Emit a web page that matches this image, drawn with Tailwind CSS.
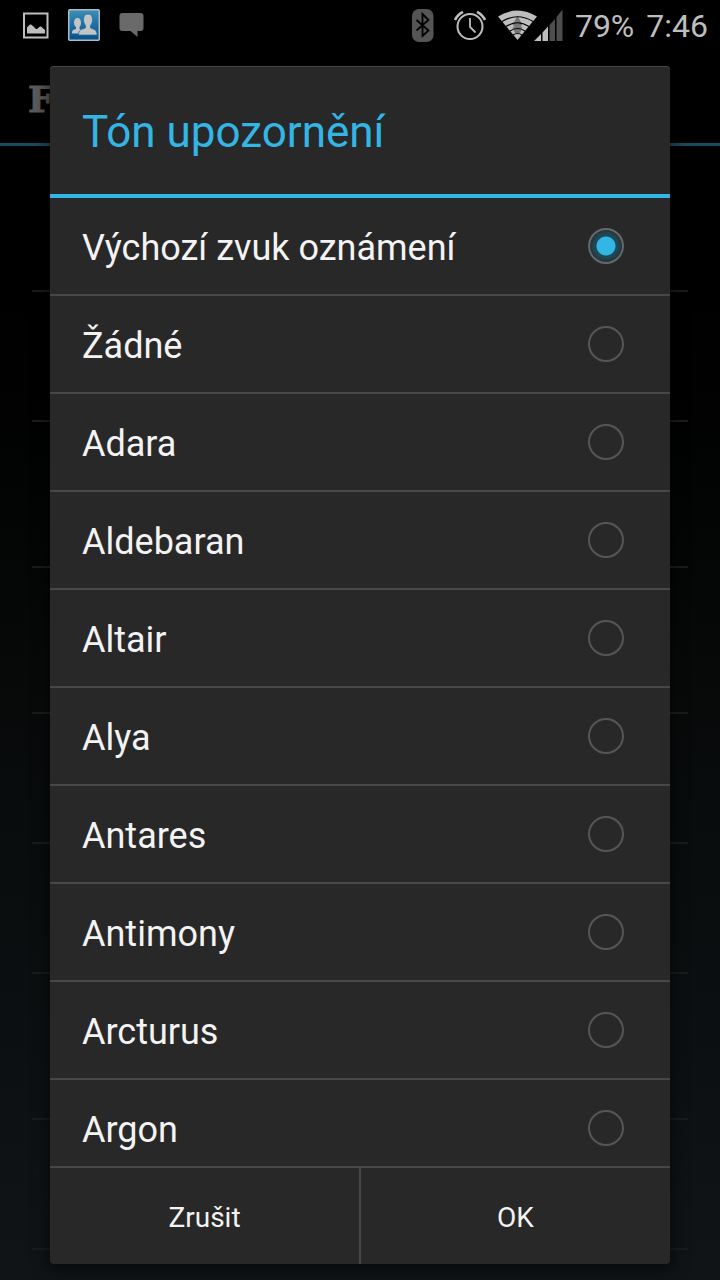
<!DOCTYPE html>
<html lang="cs">

<head>
    <title>Tón upozornění</title>
    <meta charset="UTF-8">
    <meta name="viewport" content="width=device-width, initial-scale=1">
    <script src="https://cdn.jsdelivr.net/npm/@tailwindcss/browser@4"></script>
</head>

<body class="bg-black font-['Roboto',sans-serif]">

<div class="relative h-screen flex flex-col overflow-hidden">

    <!-- Status bar -->
    <header class="h-[50px] shrink-0 flex items-center justify-between pl-[22px] pr-3 bg-black text-[#bebebe]">
        <div class="flex items-center gap-[19px]">
            <svg class="w-[27px] h-[27px]" viewBox="0 0 27 27">
                <rect x="2" y="1.500" width="23.500" height="24" fill="none" stroke="#bebebe" stroke-width="2"/>
                <path d="M5 21.500v-6l3-3h1l2 1.500 3 3h1l3-2.500h1l4 3.500v3.500z" fill="#bebebe"/>
            </svg>
            <svg class="w-8 h-8" viewBox="0 0 32 32">
                <defs>
                    <linearGradient id="contacts" x1="0" y1="0" x2="0" y2="1">
                        <stop offset="0" stop-color="#3d8fb4"/>
                        <stop offset=".5" stop-color="#1c6ea5"/>
                        <stop offset="1" stop-color="#07508a"/>
                    </linearGradient>
                </defs>
                <rect x=".75" y=".75" width="30.500" height="30.500" rx="1" fill="url(#contacts)" stroke="#a9bcc8" stroke-width="1.500"/>
                <g fill="#c4c4c4">
                    <path d="M9.500 9c2.500 0 3.500 2 3.500 5 0 2-.8 3-1.500 4v2l2.500 1.500-3.500 3H4c0-3 .5-3.500 4-4.500v-2c-1-1-2-2-2-4 0-3 1-5 3.500-5z"/>
                    <path d="M20 5c3 0 4.500 2 4.500 5.500 0 3-1 4.500-2 6V19c4 1.500 6.500 2 6.500 7H10.500c0-5 2.500-5.500 7-7v-2.500c-1-1.500-2-3-2-6C15.500 7 17 5 20 5z" stroke="#1c6ea5" stroke-width=".7"/>
                </g>
            </svg>
            <svg class="w-[25px] h-6" viewBox="0 0 24 24">
                <path d="M3 0h18a3 3 0 0 1 3 3v12a3 3 0 0 1-3 3h-3v6l-7-6H3a3 3 0 0 1-3-3V3a3 3 0 0 1 3-3z" fill="#6a6a6a"/>
            </svg>
        </div>
        <div class="flex items-center">
            <svg class="w-[22px] h-[33px] mr-5" viewBox="0 0 22 33">
                <rect width="21.500" height="33" rx="7" fill="#555"/>
                <path d="M4.500 11l12 10.500-6 5.500V5l6 6-12 10.500" fill="none" stroke="#000" stroke-width="1.800"/>
            </svg>
            <svg class="w-8 h-[30px] mr-3" viewBox="0 0 32 30" fill="none" stroke="#bebebe">
                <circle cx="16" cy="16.500" r="12.500" stroke-width="2"/>
                <path d="M16 8v9l5.500 5.500" stroke-width="1.800"/>
                <path d="M1 10Q3.500 4.500 9 1.800M31 10Q28.500 4.500 23 1.800" stroke-width="2.600"/>
            </svg>
            <svg class="w-[65px] h-8" viewBox="0 0 65 32">
                <path d="M0 7.500Q19.500-4.500 39 7.500L19.500 31z" fill="#bebebe"/>
                <path d="M19.500 7l4 7h2l-3 4h2l-2.500 6h-5l-2.500-6h2l-3-4h2z" fill="#777"/>
                <path d="M4 12.500Q19.500 3 35 12.500M8 17.500Q19.500 10 31 17.500M12 22Q19.500 17 27 22M15 26Q19.500 23 24 26" fill="none" stroke="#000" stroke-width="1.100"/>
                <path d="M36 32l7-7v7zM44.500 23.500l5.500-6V32h-5.500z" fill="#bebebe"/>
                <path d="M51.500 16l5.500-6v22h-5.500zM58.500 8l6-7.500V32h-6z" fill="#4d4d4d"/>
            </svg>
            <span class="ml-3 pt-0.5 text-[32px] leading-9">79%</span>
            <span class="ml-3 pt-0.5 text-[32px] leading-9">7:46</span>
        </div>
    </header>

    <!-- Settings screen under the dialog -->
    <main class="flex-1 flex flex-col bg-linear-to-b from-black via-[#070909] to-[#101417]">
        <div class="h-24 shrink-0 flex items-center pl-7 border-b-[3px] border-[#184a60] bg-black">
            <span class="pt-1 font-['DejaVu_Serif',serif] font-bold text-4xl text-[#5c5c5c] [-webkit-text-stroke:1px_#5c5c5c]">F</span>
        </div>
        <div class="mx-8 *:border-b-2 *:border-[#1a1b1c]">
            <div class="h-[146px]"></div>
            <div class="h-[130px]"></div>
            <div class="h-[146px]"></div>
            <div class="h-[146px]"></div>
            <div class="h-[130px]"></div>
            <div class="h-[130px]"></div>
            <div class="h-[146px]"></div>
            <div class="h-[130px]"></div>
        </div>
    </main>

    <!-- Dialog -->
    <div class="absolute inset-0 flex px-[50px] pt-[66px] pb-4">
        <form role="dialog" aria-labelledby="dialogTitle" class="flex-1 min-w-0 flex flex-col rounded-sm overflow-hidden bg-[#282828] text-[#f3f3f3] shadow-[0_4px_16px_2px_#00000090,inset_0_1px_0_#484848]">
            <h1 id="dialogTitle" class="h-[132px] shrink-0 flex items-center px-8 pt-1 border-b-4 border-[#33b5e5] text-[44px] text-[#33b5e5]">Tón upozornění</h1>

            <div id="toneList" class="flex-1 min-h-0 overflow-y-auto [scrollbar-width:none]"></div>

            <div class="h-[98px] shrink-0 flex border-t-2 border-[#484848] text-[28px]">
                <button type="button" class="flex-1 pt-1 border-r-2 border-[#484848]">Zrušit</button>
                <button type="submit" class="flex-1 pt-1">OK</button>
            </div>
        </form>
    </div>
</div>

<script>
    const tones = ["Výchozí zvuk oznámení", "Žádné", "Adara", "Aldebaran", "Altair", "Alya", "Antares", "Antimony", "Arcturus", "Argon"];
    const toneList = document.getElementById("toneList");

    tones.forEach(function (tone, i) {
        const row = document.createElement("label");
        row.className = "h-[98px] flex items-center justify-between pl-8 pr-[46px] border-b-2 border-[#484848] text-4xl";

        const name = document.createElement("span");
        name.className = "pt-1";
        name.append(tone);
        row.append(name);

        const radio = document.createElement("input");
        radio.type = "radio";
        radio.name = "tone";
        radio.value = tone;
        radio.checked = i === 0;
        radio.className = "appearance-none size-9 shrink-0 rounded-full border-2 border-[#565656] checked:border-[#626a6e] checked:bg-[radial-gradient(circle,#33b5e5_0_9px,#174555_10px,#204a5a_11px,#293336_16px)]";
        row.append(radio);

        toneList.append(row);
    });

    document.querySelector("form").addEventListener("submit", function (event) {
        event.preventDefault();
    });
</script>
</body>

</html>
